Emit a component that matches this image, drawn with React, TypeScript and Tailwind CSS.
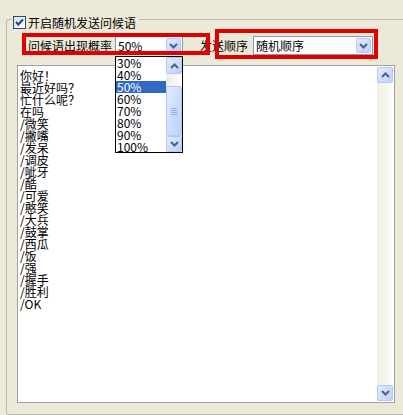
import type { ReactNode } from "react";

const LINES = [
  "你好！",
  "最近好吗？",
  "忙什么呢？",
  "在吗",
  "/微笑",
  "/撇嘴",
  "/发呆",
  "/调皮",
  "/呲牙",
  "/酷",
  "/可爱",
  "/憨笑",
  "/大兵",
  "/鼓掌",
  "/西瓜",
  "/饭",
  "/强",
  "/握手",
  "/胜利",
  "/OK",
];

const OPTIONS = ["30%", "40%", "50%", "60%", "70%", "80%", "90%", "100%"];

const XP_BTN =
  "flex items-center justify-center rounded-[2px] border border-[#b4c8f6] bg-gradient-to-br from-[#e3ebfe] to-[#bcd0fa]";

function Chevron({ up = false }: { up?: boolean }) {
  return (
    <svg width="9" height="6" viewBox="0 0 9 6">
      <path
        d={up ? "M1 5 L4.5 1.5 L8 5" : "M1 1 L4.5 4.5 L8 1"}
        fill="none"
        stroke="#4d6185"
        strokeWidth="2"
      />
    </svg>
  );
}

function ScrollBtn({ up, className }: { up?: boolean; className: string }) {
  return (
    <div className={`${XP_BTN} ${className}`}>
      <Chevron up={up} />
    </div>
  );
}

function Checkbox() {
  return (
    <div className="flex h-[13px] w-[13px] items-center justify-center border border-[#1c5180] bg-gradient-to-br from-[#dcdcd7] to-white">
      <svg width="11" height="11" viewBox="0 0 11 11">
        <path d="M2 5 L4.3 7.5 L9 2.5" fill="none" stroke="#1c3f95" strokeWidth="2" />
      </svg>
    </div>
  );
}

function Combo({ value, className }: { value: string; className: string }) {
  return (
    <div
      className={`flex h-[19px] items-center border border-[#7f9db9] bg-white ${className}`}
    >
      <span className="flex-1 pl-[2px] leading-[13px]">{value}</span>
      <ScrollBtn className="m-[1px] h-[15px] w-[15px]" />
    </div>
  );
}

function RedBox({ className }: { className: string }) {
  return (
    <div
      className={`pointer-events-none absolute border-[4px] border-[#e00000] ${className}`}
    />
  );
}

function Dropdown() {
  return (
    <div className="absolute left-[115px] top-[56px] flex h-[97px] w-[68px] border border-black bg-white">
      <div className="flex-1 leading-[12px]">
        {OPTIONS.map((o) => (
          <div
            key={o}
            className={`h-[12px] pl-[1px] ${o === "50%" ? "bg-[#316ac5] text-white" : ""}`}
          >
            {o}
          </div>
        ))}
      </div>
      <div className="flex w-[16px] flex-col bg-gradient-to-r from-[#eeede5] to-[#fdfdfb]">
        <ScrollBtn up className="h-[17px] w-[16px]" />
        <div className="flex-1" />
        <div className={`${XP_BTN} h-[50px] w-[16px] flex-col gap-[1px]`}>
          {[0, 1, 2, 3].map((i) => (
            <div key={i} className="h-[1px] w-[6px] bg-[#8cb0f8]" />
          ))}
        </div>
        <ScrollBtn className="h-[16px] w-[16px]" />
      </div>
    </div>
  );
}

function TextArea({ children }: { children: ReactNode }) {
  return (
    <div className="ml-[10px] mt-[10px] flex h-[338px] w-[378px] border border-[#a0a0a0] bg-white">
      <div className="flex-1 whitespace-pre pl-[2px] pt-[4px] leading-[12px]">
        {children}
      </div>
      <div className="my-[1px] mr-[1px] flex w-[16px] flex-col justify-between bg-gradient-to-r from-[#eeede5] to-[#fdfdfb]">
        <ScrollBtn up className="h-[16px] w-[16px]" />
        <ScrollBtn className="h-[16px] w-[16px]" />
      </div>
    </div>
  );
}

export default function App() {
  return (
    <div className="relative h-[415px] w-[403px] overflow-hidden bg-[#ece9d8] font-['Noto_Sans_CJK_SC',sans-serif] text-[12px] leading-[13px] text-black">
      <div className="ml-[6px] mt-[19px] h-[396px] w-[397px] rounded-tl-[3px] rounded-bl-[3px] border-b border-l border-t border-[#bcb9a8]">
        <div className="-mt-[4px] ml-[5px] flex w-fit items-center gap-[2px] bg-[#ece9d8] pl-[1px] pr-[3px]">
          <Checkbox />
          <span>开启随机发送问候语</span>
        </div>

        <div className="mt-[7px] flex h-[19px] items-center">
          <span className="ml-[21px] w-[84px] whitespace-nowrap">问候语出现概率</span>
          <Combo value="50%" className="ml-[3px] w-[68px]" />
          <span className="ml-[17px] whitespace-nowrap">发送顺序</span>
          <Combo value="随机顺序" className="ml-[5px] w-[120px]" />
        </div>

        <TextArea>
          {LINES.map((l) => (
            <div key={l} className="h-[12px]">
              {l}
            </div>
          ))}
        </TextArea>
      </div>

      <RedBox className="left-[22px] top-[33px] h-[22px] w-[188px]" />
      <RedBox className="left-[215px] top-[29px] h-[30px] w-[163px]" />
      <Dropdown />
    </div>
  );
}
